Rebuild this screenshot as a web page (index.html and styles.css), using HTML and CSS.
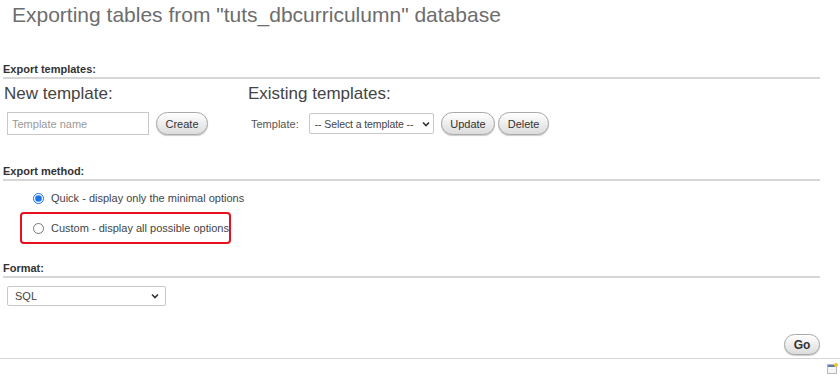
FILE: index.html
```html
<!DOCTYPE html>
<html lang="en">
<head>
	<meta charset="utf-8" />
	<title>Export</title>
	<link rel="stylesheet" href="styles.css">
</head>
<body>
	<div id="page">
		<h2 class="page-title">Exporting tables from "tuts_dbcurriculumn" database</h2>

		<div class="exportoptions" id="export-templates">
			<h3>Export templates:</h3>
			<div class="templates-row">
				<div class="template-new">
					<h4>New template:</h4>
					<form class="tpl-form">
						<input type="text" class="tpl-name" placeholder="Template name">
						<button type="button" class="btn">Create</button>
					</form>
				</div>
				<div class="template-existing">
					<h4>Existing templates:</h4>
					<form class="tpl-form">
						<label class="tpl-label">Template:</label>
						<span class="select-wrap tpl-select">
							<select>
								<option>-- Select a template --</option>
							</select>
							<svg class="chevron" width="8" height="6" viewBox="0 0 8 6"><path d="M1 1.5 L4 4.5 L7 1.5" fill="none" stroke="#333" stroke-width="1.6"/></svg>
						</span>
						<button type="button" class="btn">Update</button>
						<button type="button" class="btn btn-tight">Delete</button>
					</form>
				</div>
			</div>
		</div>

		<div class="exportoptions" id="export-method">
			<h3>Export method:</h3>
			<ul class="method-list">
				<li>
					<input type="radio" name="method" id="quick" checked>
					<label for="quick">Quick - display only the minimal options</label>
				</li>
				<li class="highlight">
					<input type="radio" name="method" id="custom">
					<label for="custom">Custom - display all possible options</label>
				</li>
			</ul>
		</div>

		<div class="exportoptions" id="format">
			<h3>Format:</h3>
			<span class="select-wrap format-select">
				<select>
					<option>SQL</option>
				</select>
				<svg class="chevron" width="8" height="6" viewBox="0 0 8 6"><path d="M1 1.5 L4 4.5 L7 1.5" fill="none" stroke="#333" stroke-width="1.6"/></svg>
			</span>
		</div>

		<div class="go-row">
			<button type="button" class="btn btn-go">Go</button>
		</div>
	</div>

	<div class="footer-bar">
		<svg class="console-icon" width="11" height="11" viewBox="0 0 11 11">
			<rect x="0.5" y="1.5" width="9" height="9" fill="#f4f4f4" stroke="#b8b8b8"/>
			<rect x="1" y="2" width="8" height="2" fill="#5a7fb5"/>
			<circle cx="9" cy="2" r="2" fill="#f3c623"/>
		</svg>
	</div>
</body>
</html>
```

FILE: styles.css
```css
body {
	margin: 0;
	padding: 0;
	background-color: #fff;
	font-family: 'Liberation Sans', Arial, sans-serif;
	font-size: 11px;
	color: #444;
}

#page {
	width: 817px;
	margin: 0 0 0 3px;
}

.page-title {
	margin: 0;
	padding: 2px 0 0 9px;
	font-size: 21px;
	font-weight: normal;
	line-height: 26px;
	color: #6d6d6d;
}

/* Sections
 * ======== */

.exportoptions h3 {
	margin: 0;
	padding: 0 0 1px 0;
	font-size: 11px;
	font-weight: bold;
	line-height: 13px;
	color: #333;
	border-bottom: 2px solid #d6d6d6;
}

#export-templates {
	margin-top: 35px;
}

#export-method {
	margin-top: 30px;
}

#format {
	margin-top: 20px;
}

/* Templates */

.templates-row {
	display: flex;
}

.template-new {
	width: 244px;
}

.exportoptions h4 {
	margin: 5px 0 0 1px;
	font-size: 17px;
	font-weight: normal;
	line-height: 20px;
	color: #444;
}

.tpl-form {
	display: flex;
	align-items: center;
	margin: 8px 0 0 4px;
}

.tpl-name {
	box-sizing: border-box;
	width: 142px;
	height: 23px;
	margin: 0 7px 0 0;
	padding: 0 4px;
	border: 1px solid #c8c8c8;
	font-family: inherit;
	font-size: 11px;
	color: #444;
}

.tpl-name::placeholder {
	color: #999;
}

.tpl-label {
	color: #555;
	margin-right: 10px;
}

/* Selects */

.select-wrap {
	position: relative;
	display: inline-block;
	box-sizing: border-box;
}

.select-wrap select {
	appearance: none;
	-webkit-appearance: none;
	box-sizing: border-box;
	width: 100%;
	height: 100%;
	margin: 0;
	border: 1px solid #c8c8c8;
	border-radius: 2px;
	background: #fff;
	font-family: inherit;
	font-size: 11px;
	color: #444;
}

.select-wrap .chevron {
	position: absolute;
	right: 7px;
	top: 50%;
	margin-top: -3px;
	pointer-events: none;
}

.tpl-select {
	width: 125px;
	height: 21px;
	margin-right: 7px;
}

.tpl-select select {
	padding: 0 0 0 5px;
	font-size: 10.5px;
	letter-spacing: -0.1px;
}

.tpl-select .chevron {
	right: 4px;
}

.format-select {
	display: block;
	width: 159px;
	height: 20px;
	margin: 8px 0 0 4px;
}

.format-select select {
	padding: 0 0 0 7px;
}

/* Buttons */

.btn {
	box-sizing: border-box;
	height: 23px;
	padding: 0 8.5px;
	border: 1px solid #aaa;
	border-radius: 12px;
	background-image: linear-gradient(to bottom, #ffffff, #dcdcdc);
	box-shadow: 0 1px 1px #ccc;
	font-family: inherit;
	font-size: 11px;
	color: #333;
	cursor: pointer;
}

.btn-tight {
	margin-left: 3px;
}

/* Method */

.method-list {
	list-style: none;
	margin: 0;
	padding: 3px 0 0 19px;
}

.method-list li {
	display: flex;
	align-items: center;
	box-sizing: border-box;
	height: 28px;
	padding-left: 9px;
	white-space: nowrap;
}

.method-list li + li {
	margin-top: 2px;
}

.method-list input {
	width: 11px;
	height: 11px;
	margin: 0 7px 0 2px;
	accent-color: #1a73e8;
}

.method-list label {
	color: #444;
}

.highlight {
	width: 207px;
	outline: 2px solid #e8101e;
	border-radius: 2px;
}

/* Footer */

.go-row {
	display: flex;
	justify-content: flex-end;
	margin-top: 28px;
}

.btn-go {
	width: 36px;
	height: 21px;
	padding: 0;
	font-weight: bold;
	font-size: 12px;
}

.footer-bar {
	display: flex;
	justify-content: flex-end;
	margin-top: 3px;
	padding: 4px 2px 0 0;
	border-top: 1px solid #d6d6d6;
}
```
